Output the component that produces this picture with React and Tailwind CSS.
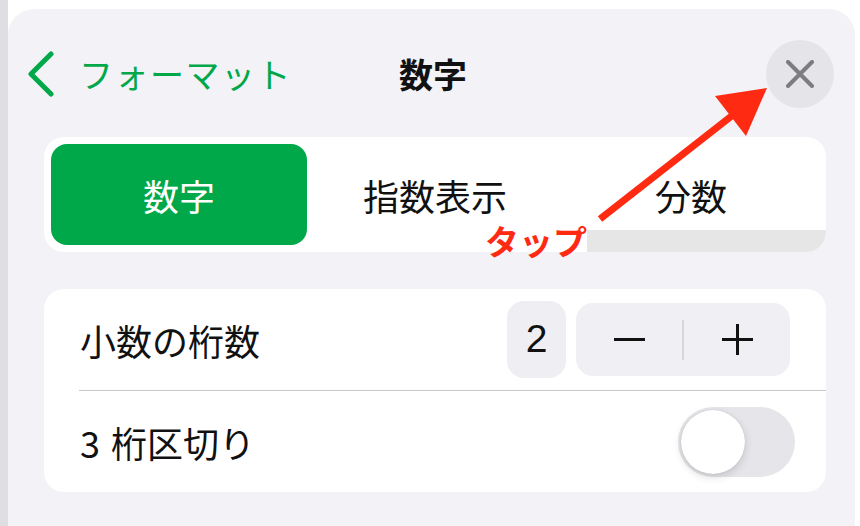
import React from 'react';

const JP = { fontFamily: '"Noto Sans CJK JP", "Noto Sans", sans-serif' };

function BackChevron() {
  return (
    <svg width="28" height="46" viewBox="0 0 28 46" fill="none">
      <polyline points="24,3 4,23 24,43" stroke="#00a84a" strokeWidth="5" strokeLinecap="round" strokeLinejoin="round" />
    </svg>
  );
}

function CloseX() {
  return (
    <svg width="28" height="28" viewBox="0 0 28 28" fill="none">
      <path d="M2 2 L26 26 M26 2 L2 26" stroke="#7c7c81" strokeWidth="4" strokeLinecap="round" />
    </svg>
  );
}

function Toggle() {
  return (
    <div className="w-[117px] h-[70px] rounded-full bg-[#e5e5ea] p-[3px] flex items-center">
      <div className="w-[64px] h-[64px] rounded-full bg-white shadow-[0_3px_8px_rgba(0,0,0,0.15),0_0_1px_rgba(0,0,0,0.2)]" />
    </div>
  );
}

function TapArrow() {
  // shaft from the label up to the close button, with a filled head
  return (
    <svg className="absolute left-0 top-0 pointer-events-none" width="860" height="526" viewBox="0 0 860 526">
      <line x1="600" y1="219" x2="738" y2="111" stroke="#ff2a12" strokeWidth="7" />
      <polygon points="767,88 746,136 715,96" fill="#ff2a12" />
    </svg>
  );
}

export default function App() {
  return (
    <div className="w-[860px] h-[526px] bg-white flex relative overflow-hidden" style={JP}>
      <div className="w-[8px] h-full bg-[#dedee3]" />
      <div className="flex-1 mt-[9px] mr-[5px] rounded-t-[26px] bg-[#f2f2f7] flex flex-col">
        {/* nav bar */}
        <div className="grid grid-cols-[1fr_auto_1fr] items-center pt-[31px] h-[99px]">
          <div className="flex items-center pl-[19px] gap-[24px]">
            <BackChevron />
            <span className="text-[34px] leading-none text-[#00a84a] tracking-[1.5px]">フォーマット</span>
          </div>
          <div className="text-[34px] leading-none font-bold text-[#111] ml-[3px]">数字</div>
          <div className="flex justify-end pr-[21px]">
            <div className="w-[68px] h-[68px] rounded-full bg-[#e4e4e9] flex items-center justify-center">
              <CloseX />
            </div>
          </div>
        </div>

        <div className="pl-[36px] pr-[29px] flex flex-col">
          {/* segmented control */}
          <div className="relative mt-[29px] h-[115px] rounded-[20px] bg-white p-[7px] grid grid-cols-3 overflow-hidden">
            <div className="absolute right-0 bottom-0 left-[543px] h-[22px] bg-[#e6e6e6]" />
            <div className="relative rounded-[16px] bg-[#00a84a] flex items-center justify-center text-white text-[36px]">数字</div>
            <div className="relative flex items-center justify-center text-[#111] text-[36px]">指数表示</div>
            <div className="relative flex items-center justify-center text-[#111] text-[36px]">分数</div>
          </div>

          {/* settings */}
          <div className="mt-[37px] rounded-[20px] bg-white flex flex-col">
            <div className="h-[101px] flex items-center justify-between pl-[36px] pr-[36px]">
              <span className="text-[36px] text-[#111]">小数の桁数</span>
              <div className="flex items-center gap-[10px]">
                <div className="w-[59px] h-[77px] rounded-[17px] bg-[#eeeef3] flex items-center justify-center text-[39px] text-[#111]" style={{ fontFamily: '"Liberation Sans", Arial, sans-serif' }}>2</div>
                <div className="w-[214px] h-[73px] rounded-[17px] bg-[#efeff4] flex items-center">
                  <div className="flex-1 flex items-center justify-center">
                    <div className="w-[31px] h-[3px] bg-[#111]" />
                  </div>
                  <div className="w-[2px] h-[40px] bg-[#d6d6db]" />
                  <div className="flex-1 flex items-center justify-center">
                    <div className="relative w-[31px] h-[31px] flex items-center justify-center">
                      <div className="w-[31px] h-[3px] bg-[#111]" />
                      <div className="absolute w-[3px] h-[31px] bg-[#111]" />
                    </div>
                  </div>
                </div>
              </div>
            </div>
            <div className="ml-[35px] h-px bg-[#c8c8cc]" />
            <div className="h-[101px] flex items-center justify-between pl-[36px] pr-[31px]">
              <span className="text-[36px] text-[#111]"><span className="mr-[11px]">3</span>桁区切り</span>
              <Toggle />
            </div>
          </div>
        </div>
      </div>

      {/* annotation */}
      <TapArrow />
      <div className="absolute left-[485px] top-[219px] text-[34px] leading-[44px] font-bold text-[#ff2a12]">タップ</div>
    </div>
  );
}
